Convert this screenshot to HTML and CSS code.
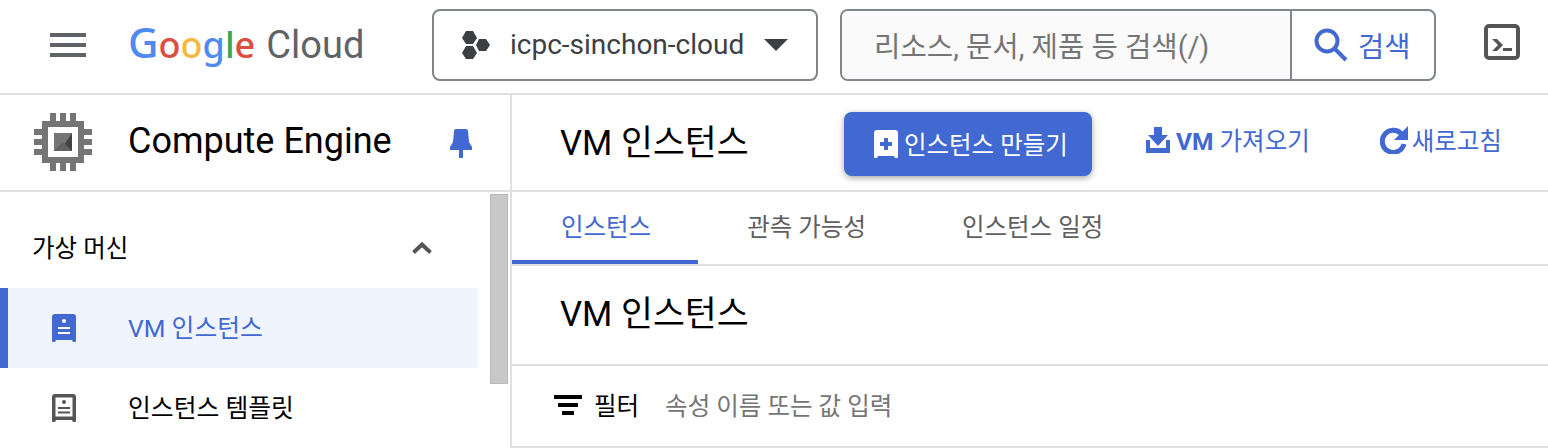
FILE: index.html
```html
<!DOCTYPE html>
<html lang="ko">
<head>
  <meta charset="UTF-8">
  <meta name="viewport" content="width=device-width, initial-scale=1.0">
  <title>VM 인스턴스 - Compute Engine</title>
  <link rel="stylesheet" href="styles.css">
</head>
<body>
  <header class="topbar">
    <svg class="menu-icon" viewBox="0 0 24 24"><path d="M3 18h18v-2H3v2zm0-5h18v-2H3v2zm0-7v2h18V6H3z"/></svg>
    <div class="logo">
      <span class="logo-google"><span class="g-cap g-blue">G</span><span class="g-red">o</span><span class="g-yellow">o</span><span class="g-blue">g</span><span class="g-green">l</span><span class="g-red">e</span></span>
      <span class="logo-cloud">Cloud</span>
    </div>
    <div class="project">
      <svg class="project-icon" viewBox="0 0 28 28">
        <path d="M4 0h7l4 7-4 6H4L0 7z"/>
        <path d="M17 8h7l4 6-4 6h-7l-3-6z"/>
        <path d="M4 15h7l4 7-4 6H4l-4-6z"/>
      </svg>
      <span class="project-name">icpc-sinchon-cloud</span>
      <span class="caret"></span>
    </div>
    <div class="search">
      <div class="search-input">리소스, 문서, 제품 등 검색(/)</div>
      <div class="search-btn">
        <svg class="search-icon" viewBox="0 0 34 34"><circle cx="13" cy="13" r="10.5"/><path d="M21 21l11 11"/></svg>
        <span>검색</span>
      </div>
    </div>
    <svg class="shell-icon" viewBox="0 0 36 36">
      <rect x="2" y="2" width="32" height="32" rx="3"/>
      <path class="shell-mark" d="M8 15h5l6 6-6 6H8l6-6z"/>
      <path class="shell-mark" d="M19 24h9v3h-9z"/>
    </svg>
  </header>

  <div class="main">
    <aside class="sidebar">
      <div class="product">
        <svg class="chip-icon" viewBox="0 0 58 58">
          <path fill="#757575" d="M16 0h6v8h4V0h6v8h4V0h6v8h8v8h8v6h-8v4h8v6h-8v4h8v6h-8v8h-8v8h-6v-8h-4v8h-6v-8h-4v8h-6v-8H8v-8H0v-6h8v-4H0v-6h8v-4H0v-6h8V8h8z"/>
          <rect x="14" y="14" width="30" height="30" fill="#fff"/>
          <rect x="20" y="20" width="18" height="18" fill="#757575"/>
          <path fill="#424242" d="M38 20v18H26z"/>
          <path fill="#616161" d="M20 38l9-9 9 9z"/>
        </svg>
        <span class="product-name">Compute Engine</span>
        <svg class="pin-icon" viewBox="0 0 22 29"><path d="M6 0h10a2 2 0 0 1 2 2l1 11 3 5v3H13v8H9v-8H0v-3l3-5L4 2a2 2 0 0 1 2-2z"/></svg>
      </div>
      <div class="side-body">
        <nav class="side-nav">
          <div class="side-group">
            <span>가상 머신</span>
            <svg class="chevron" viewBox="0 0 20 12"><path d="M1.5 10.5L10 2.5l8.5 8"/></svg>
          </div>
          <div class="side-item active">
            <svg class="item-icon" viewBox="0 0 24 28">
              <path d="M3 0h18a3 3 0 0 1 3 3v24a1 1 0 0 1-1 1h-2l-1-2H4l-1 2H1a1 1 0 0 1-1-1V3a3 3 0 0 1 3-3z"/>
              <circle cx="12" cy="7" r="2" fill="#fff"/>
              <path fill="#fff" d="M6 13h12v2H6zM6 18h12v2H6z"/>
            </svg>
            <span class="item-label">VM 인스턴스</span>
          </div>
          <div class="side-item">
            <svg class="item-icon" viewBox="0 0 24 28">
              <path d="M3 0h18a3 3 0 0 1 3 3v24a1 1 0 0 1-1 1h-2l-1-2H4l-1 2H1a1 1 0 0 1-1-1V3a3 3 0 0 1 3-3z"/>
              <rect x="3.5" y="3.5" width="17" height="19" fill="#fff"/>
              <circle cx="12" cy="8" r="2"/>
              <path d="M6 13h12v2H6zM6 17.5h12v2H6z"/>
            </svg>
            <span class="item-label">인스턴스 템플릿</span>
          </div>
        </nav>
        <div class="scrollbar"></div>
      </div>
    </aside>

    <section class="content">
      <div class="page-head">
        <h1 class="page-title">VM 인스턴스</h1>
        <button class="create-btn">
          <svg class="create-icon" viewBox="0 0 24 28">
            <path fill="#fff" d="M3 0h18a3 3 0 0 1 3 3v24a1 1 0 0 1-1 1h-2l-1-2H4l-1 2H1a1 1 0 0 1-1-1V3a3 3 0 0 1 3-3z"/>
            <path fill="#4169d1" d="M10 8h4v4h4v4h-4v4h-4v-4H6v-4h4z"/>
          </svg>
          <span>인스턴스 만들기</span>
        </button>
        <a class="head-link import-link">
          <svg class="import-icon" viewBox="0 0 24 26"><path d="M8 0h8v8h6L12 19 2 8h6z"/><path d="M0 13h4v8h16v-8h4v13H0z"/></svg>
          <span><b>VM</b> 가져오기</span>
        </a>
        <a class="head-link refresh-link">
          <svg class="refresh-icon" viewBox="0 0 28 28">
            <path class="refresh-arc" d="M21.5 8A11 11 0 1 0 24 18"/>
            <path class="refresh-head" d="M28 0v14H14z"/>
          </svg>
          <span>새로고침</span>
        </a>
      </div>

      <div class="tabs">
        <div class="tab active">인스턴스</div>
        <div class="tab">관측 가능성</div>
        <div class="tab">인스턴스 일정</div>
      </div>

      <div class="section-head">VM 인스턴스</div>

      <div class="filter-row">
        <svg class="filter-icon" viewBox="0 0 28 20"><path d="M0 0h28v4H0zM4 8h20v4H4zM8 16h12v4H8z"/></svg>
        <span class="filter-label">필터</span>
        <span class="filter-hint">속성 이름 또는 값 입력</span>
      </div>
    </section>
  </div>
</body>
</html>
```

FILE: styles.css
```css
* {
  box-sizing: border-box;
}
html, body {
  height: 448px;
  overflow: hidden;
}
body {
  margin: 0;
  background: white;
  color: black;
  font-family: Roboto, "Noto Sans CJK KR", sans-serif;
  font-size: 24.5px;
}
svg {
  display: block;
  flex: none;
}

/* top bar */
.topbar {
  display: flex;
  align-items: center;
  height: 95px;
  padding: 0 0 4px 44px;
  border-bottom: 2px solid #e0e0e0;
}
.menu-icon {
  width: 48px;
  height: 48px;
  fill: #5f6368;
}
.logo {
  display: flex;
  align-items: baseline;
  width: 302px;
  margin: 0 0 0 38px;
  padding-bottom: 6px;
}
.logo-google {
  font-family: "Noto Sans", sans-serif;
  font-size: 36px;
  font-weight: 500;
}
.g-cap {
  font-size: 42px;
  margin-left: -2px;
}
.logo-cloud {
  margin-left: 11px;
  font-size: 38px;
  color: #5f6368;
}
.g-blue { color: #4f8af0; }
.g-red { color: #dc4e41; }
.g-yellow { color: #f4b93e; }
.g-green { color: #34a853; }

.project {
  display: flex;
  align-items: center;
  width: 386px;
  height: 72px;
  padding-left: 28px;
  border: 2px solid #80868b;
  border-radius: 8px;
}
.project-icon {
  width: 28px;
  height: 28px;
  fill: #3c4043;
}
.project-name {
  margin-left: 20px;
  font-size: 28px;
  color: #3c4043;
}
.caret {
  margin-left: 20px;
  border-left: 12px solid transparent;
  border-right: 12px solid transparent;
  border-top: 12px solid #3c4043;
}
.search {
  display: flex;
  width: 596px;
  height: 72px;
  margin-left: 22px;
  border: 2px solid #80868b;
  border-radius: 8px;
  overflow: hidden;
}
.search-input {
  display: flex;
  align-items: center;
  width: 450px;
  padding-left: 32px;
  background: #fafafa;
  border-right: 2px solid #80868b;
  font-size: 28.7px;
  color: #757575;
}
.search-btn {
  display: flex;
  align-items: center;
  flex: 1;
  padding-left: 22px;
  font-size: 28.5px;
  color: #4169d1;
}
.search-btn span {
  margin-left: 10px;
}
.search-icon {
  width: 34px;
  height: 34px;
  fill: none;
  stroke: #4169d1;
  stroke-width: 4;
}
.shell-icon {
  width: 36px;
  height: 36px;
  margin: 0 0 6px 48px;
}
.shell-icon rect {
  fill: none;
  stroke: #555;
  stroke-width: 4;
}
.shell-mark {
  fill: #555;
}

/* sidebar */
.main {
  display: flex;
  height: 353px;
}
.sidebar {
  width: 512px;
  flex: none;
  border-right: 2px solid #e0e0e0;
}
.product {
  display: flex;
  align-items: center;
  height: 97px;
  padding: 0 0 2px 34px;
  border-bottom: 2px solid #e0e0e0;
}
.chip-icon {
  width: 58px;
  height: 58px;
}
.product-name {
  width: 322px;
  margin: 0 0 2px 36px;
  font-size: 36px;
}
.pin-icon {
  width: 22px;
  height: 29px;
  margin-top: 4px;
  fill: #4169d1;
}
.side-body {
  display: flex;
}
.side-nav {
  width: 478px;
}
.side-group {
  display: flex;
  align-items: center;
  justify-content: space-between;
  height: 96px;
  padding: 12px 46px 0 32px;
}
.chevron {
  width: 20px;
  height: 12px;
  margin-top: 4px;
  fill: none;
  stroke: #555;
  stroke-width: 4;
}
.side-item {
  display: flex;
  align-items: center;
  height: 80px;
  padding-left: 52px;
  font-size: 24.8px;
}
.side-item .item-icon {
  width: 24px;
  height: 28px;
  margin-right: 52px;
  fill: #555;
}
.item-label {
  margin-bottom: 4px;
}
.side-item.active {
  padding-left: 44px;
  border-left: 8px solid #4169d1;
  background: #f0f4fd;
  color: #4169d1;
}
.side-item.active .item-icon {
  fill: #4169d1;
}
.scrollbar {
  width: 18px;
  height: 190px;
  margin: 2px 0 0 12px;
  background: #c8c8c8;
  border: 1px solid #b8b8b8;
}

/* content */
.content {
  flex: 1;
}
.page-head {
  display: flex;
  align-items: center;
  height: 97px;
  padding: 0 0 6px 48px;
  border-bottom: 2px solid #e0e0e0;
}
.page-title {
  width: 284px;
  margin: 0;
  font-size: 34.7px;
  font-weight: 400;
}
.create-btn {
  display: flex;
  align-items: center;
  width: 248px;
  height: 64px;
  margin-top: 8px;
  padding: 0 0 0 30px;
  border: none;
  border-radius: 8px;
  background: #4169d1;
  box-shadow: 0 2px 6px rgba(0, 0, 0, 0.35);
  color: white;
  font: inherit;
}
.create-icon {
  width: 24px;
  height: 28px;
  margin-right: 6px;
}
.head-link {
  display: flex;
  align-items: center;
  color: #4169d1;
}
.import-link {
  margin-left: 54px;
}
.import-icon {
  width: 24px;
  height: 26px;
  margin-right: 6px;
  fill: #4169d1;
}
.refresh-link {
  margin-left: 70px;
}
.refresh-icon {
  width: 28px;
  height: 28px;
  margin-right: 4px;
}
.refresh-arc {
  fill: none;
  stroke: #4169d1;
  stroke-width: 5;
}
.refresh-head {
  fill: #4169d1;
}
.tabs {
  display: flex;
  height: 74px;
  border-bottom: 2px solid #e0e0e0;
}
.tab {
  height: 72px;
  padding: 16px 47px 0 49px;
  color: #5f5f5f;
}
.tab.active {
  border-bottom: 4px solid #4169d1;
  color: #4169d1;
}
.section-head {
  display: flex;
  align-items: center;
  height: 100px;
  padding: 0 0 8px 48px;
  border-bottom: 2px solid #e0e0e0;
  font-size: 34.7px;
}
.filter-row {
  display: flex;
  align-items: center;
  height: 82px;
  padding: 0 0 2px 42px;
  border-bottom: 2px solid #e0e0e0;
}
.filter-icon {
  width: 28px;
  height: 20px;
  fill: black;
}
.filter-label {
  margin: 0 0 2px 12px;
}
.filter-hint {
  margin: 0 0 2px 26px;
  color: #757575;
}
```
